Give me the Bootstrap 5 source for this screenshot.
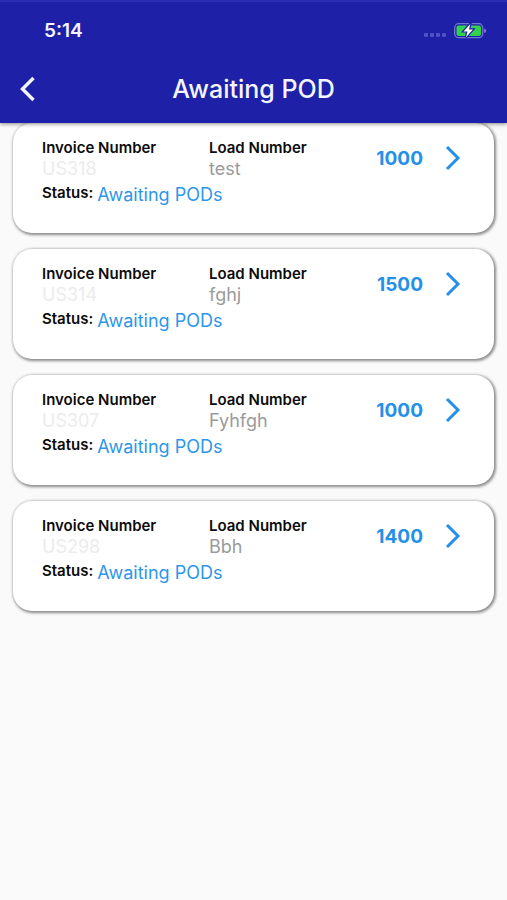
<!DOCTYPE html>
<html lang="en">
<head>
<meta charset="utf-8">
<meta name="viewport" content="width=device-width, initial-scale=1">
<title>Awaiting POD</title>
<link href="https://cdn.jsdelivr.net/npm/bootstrap@5.3.0/dist/css/bootstrap.min.css" rel="stylesheet">
<style>
  body { font-family: Inter, "Liberation Sans", sans-serif; background: #fafafa; color: #0c0c0c; }
  .app-header { background: #1e20a8; color: #f4f5ff; box-shadow: 0 1px 4px rgba(0,0,0,.45); z-index: 2; border-top: 2px solid #2b2db2; }
  .status-bar { height: 53px; padding: 5px 20px 0 44px; }
  .clock { font-size: 19px; line-height: 24px; font-weight: 600; }
  .title-bar { display: grid; grid-template-columns: 56px 1fr 56px; height: 68px; }
  .title-bar h1 { font-size: 25px; line-height: 32px; font-weight: 500; }
  .back-btn { padding: 0 0 0 19px; color: inherit; border: 0; line-height: 1; text-align: left; }
  .invoice-list { padding: 0 13px; gap: 16px; }
  .invoice { min-height: 110px; padding: 15px 33px 0 29px; border-radius: 19px; background: #fff; color: inherit;
    box-shadow: 1px 1px 3px 1px rgba(0,0,0,.45); display: grid; grid-template-columns: minmax(0, 167fr) minmax(0, 167fr) 47px 38px; }
  .field-label { font-size: 15px; line-height: 20px; font-weight: 600; }
  .field-value { font-size: 18px; line-height: 22px; color: #9a9a9a; }
  .faint { color: #ececec; }
  .state-row { padding-top: 3px; }
  .state { font-size: 18px; line-height: 24px; color: #2d96ea; }
  .amount { font-size: 19px; line-height: 42px; font-weight: 700; color: #2490e8; text-align: right; }
  .chevron { color: #2490e8; height: 40px; }
</style>
</head>
<body>
<header class="app-header position-relative">
  <div class="status-bar d-flex align-items-center justify-content-between">
    <span class="clock">5:14</span>
    <svg width="66" height="20" viewBox="0 0 66 20" role="img" aria-label="Battery charging">
      <g fill="#4f51c2"><rect x="3" y="12" width="4" height="4" rx="1"/><rect x="9" y="12" width="4" height="4" rx="1"/><rect x="15" y="12" width="4" height="4" rx="1"/><rect x="21" y="12" width="4" height="4" rx="1"/></g>
      <rect x="33.700" y="2.700" width="28" height="14" rx="4" fill="none" stroke="#7276cf" stroke-width="1.300"/>
      <rect x="35.500" y="4.500" width="24.500" height="10.500" rx="2" fill="#34d14f"/>
      <path d="M63.200 7.500q2 .7 2 2.300t-2 2.300z" fill="#8a7fd8"/>
      <path d="M49.300 3 42.500 10.400h4L45 16.300l7-7.800h-4z" fill="#fff" stroke="#1e20a8" stroke-width="2.400" paint-order="stroke"/>
    </svg>
  </div>
  <div class="title-bar align-items-center">
    <button type="button" class="btn back-btn" aria-label="Back">
      <svg width="18" height="26" viewBox="0 0 18 26" fill="none" stroke="currentColor" stroke-width="3.400"><path d="M14.500 2 3.500 13l11 11"/></svg>
    </button>
    <h1 class="m-0 text-center">Awaiting POD</h1>
  </div>
</header>
<main class="invoice-list d-flex flex-column pb-3">
  <a href="#us318" class="invoice text-decoration-none">
    <div><div class="field-label">Invoice Number</div><div class="field-value faint">US318</div>
      <div class="state-row d-flex gap-1 text-nowrap"><span class="field-label">Status:</span><span class="state">Awaiting PODs</span></div></div>
    <div><div class="field-label">Load Number</div><div class="field-value">test</div></div>
    <div class="amount">1000</div>
    <div class="chevron d-flex align-items-center justify-content-end"><svg width="16" height="26" viewBox="0 0 16 26" fill="none" stroke="currentColor" stroke-width="3"><path d="M2 2l11 11L2 24"/></svg></div>
  </a>
  <a href="#us314" class="invoice text-decoration-none">
    <div><div class="field-label">Invoice Number</div><div class="field-value faint">US314</div>
      <div class="state-row d-flex gap-1 text-nowrap"><span class="field-label">Status:</span><span class="state">Awaiting PODs</span></div></div>
    <div><div class="field-label">Load Number</div><div class="field-value">fghj</div></div>
    <div class="amount">1500</div>
    <div class="chevron d-flex align-items-center justify-content-end"><svg width="16" height="26" viewBox="0 0 16 26" fill="none" stroke="currentColor" stroke-width="3"><path d="M2 2l11 11L2 24"/></svg></div>
  </a>
  <a href="#us307" class="invoice text-decoration-none">
    <div><div class="field-label">Invoice Number</div><div class="field-value faint">US307</div>
      <div class="state-row d-flex gap-1 text-nowrap"><span class="field-label">Status:</span><span class="state">Awaiting PODs</span></div></div>
    <div><div class="field-label">Load Number</div><div class="field-value">Fyhfgh</div></div>
    <div class="amount">1000</div>
    <div class="chevron d-flex align-items-center justify-content-end"><svg width="16" height="26" viewBox="0 0 16 26" fill="none" stroke="currentColor" stroke-width="3"><path d="M2 2l11 11L2 24"/></svg></div>
  </a>
  <a href="#us298" class="invoice text-decoration-none">
    <div><div class="field-label">Invoice Number</div><div class="field-value faint">US298</div>
      <div class="state-row d-flex gap-1 text-nowrap"><span class="field-label">Status:</span><span class="state">Awaiting PODs</span></div></div>
    <div><div class="field-label">Load Number</div><div class="field-value">Bbh</div></div>
    <div class="amount">1400</div>
    <div class="chevron d-flex align-items-center justify-content-end"><svg width="16" height="26" viewBox="0 0 16 26" fill="none" stroke="currentColor" stroke-width="3"><path d="M2 2l11 11L2 24"/></svg></div>
  </a>
</main>
<script src="https://cdn.jsdelivr.net/npm/bootstrap@5.3.0/dist/js/bootstrap.bundle.min.js"></script>
</body>
</html>
